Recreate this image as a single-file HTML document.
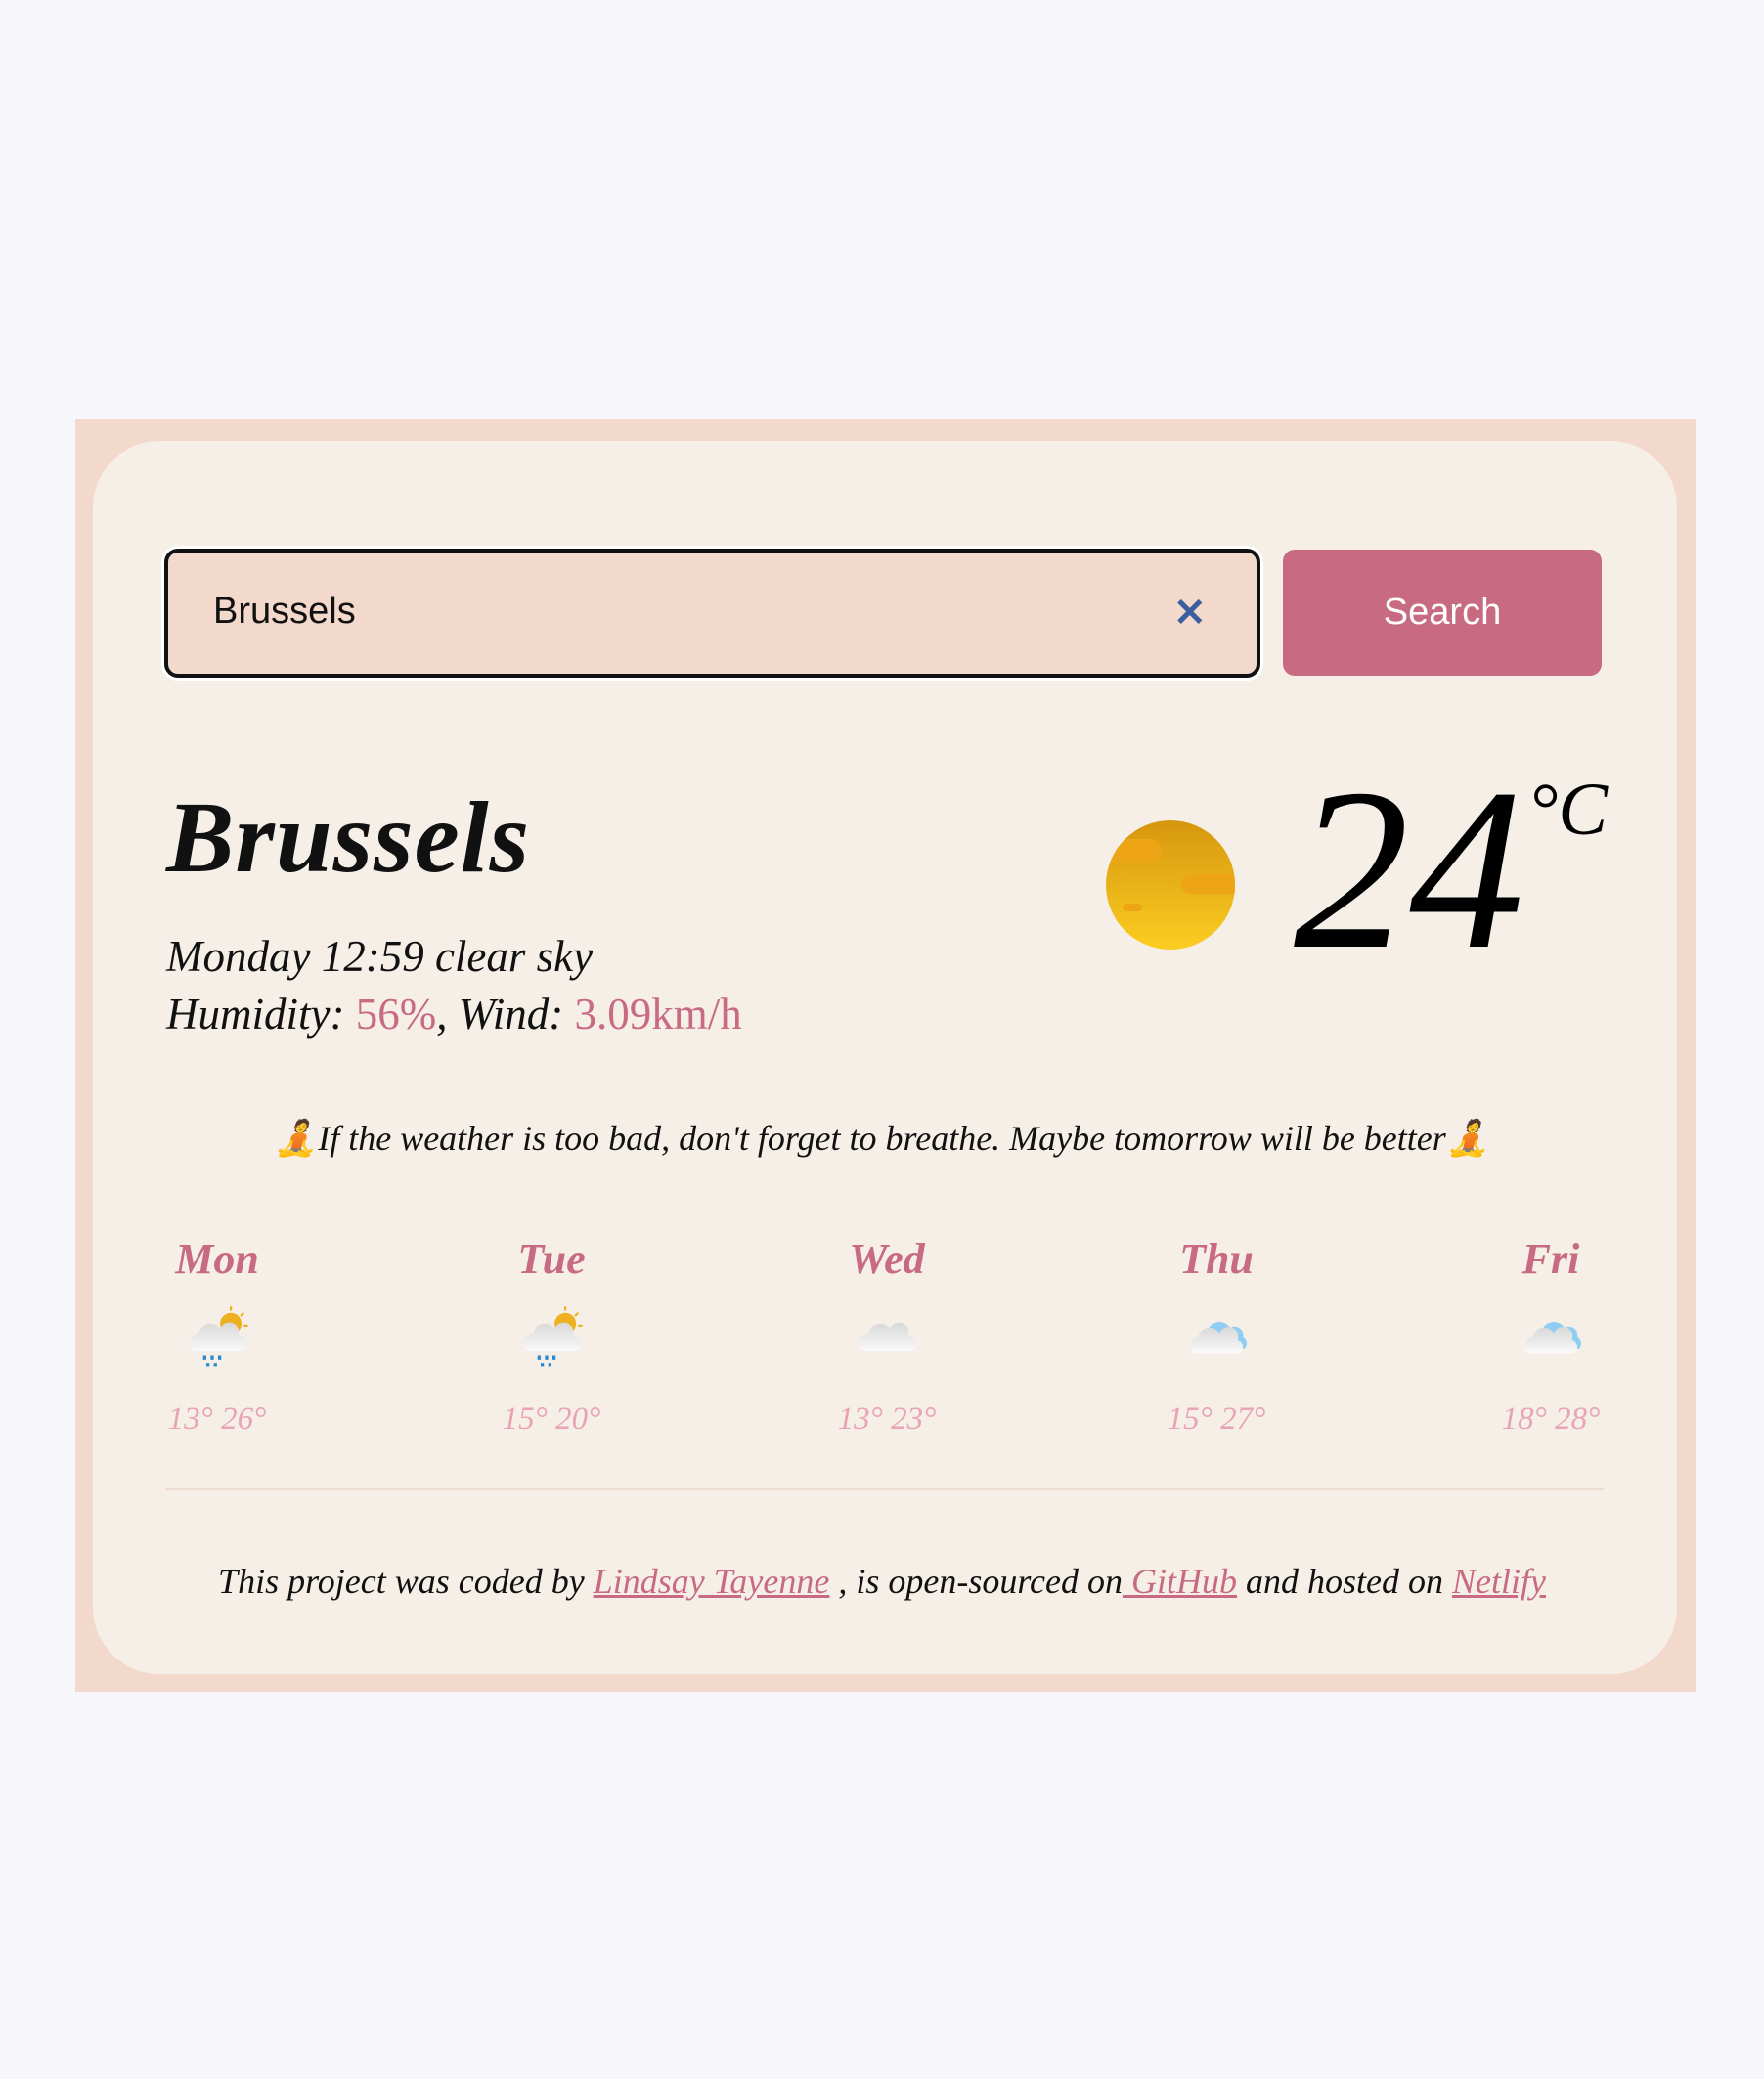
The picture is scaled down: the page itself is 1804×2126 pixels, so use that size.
<!DOCTYPE html>
<html><head><meta charset="utf-8">
<style>
*{margin:0;padding:0;box-sizing:border-box}
body{width:1804px;height:2126px;background:#f7f7fb;position:relative;overflow:hidden;font-family:"Liberation Serif",serif}
.outer{position:absolute;left:77px;top:428px;width:1657px;height:1302px;background:#f3d8cc}
.card{position:absolute;left:95px;top:451px;width:1620px;height:1261px;background:#f5efe8;border-radius:68px}
.abs{position:absolute;white-space:nowrap}
.input{left:168px;top:561px;width:1121px;height:132px;background:#f3d8cc;border:4px solid #111;border-radius:14px;box-shadow:0 0 0 3px #fff}
.btn{left:1312px;top:562px;width:326px;height:129px;background:#c76a82;border-radius:12px;color:#fff;font-family:"Liberation Sans",sans-serif;font-size:38px;text-align:center;line-height:129px}
.it{font-style:italic}
.pink{color:#c76a82}
.day{font-style:italic;font-weight:bold;color:#c76a82;font-size:44px;width:200px;text-align:center}
.tmp{font-style:italic;color:#e8a4b4;font-size:33px;width:200px;text-align:center}
a{color:#c76a82;text-decoration:underline}
</style></head><body>
<div class="outer"></div>
<div class="card"></div>
<div class="abs input"></div>
<div class="abs" style="left:218px;top:604px;font-family:'Liberation Sans',sans-serif;font-size:38px;color:#111">Brussels</div>
<div class="abs" style="left:1200px;top:604px;font-family:'Liberation Sans',sans-serif;font-size:40px;font-weight:bold;color:#3b5f9e">✕</div>
<div class="abs btn">Search</div>

<div class="abs it" style="left:170px;top:797px;font-size:104px;font-weight:bold;color:#111;letter-spacing:1px">Brussels</div>
<div class="abs it" style="left:170px;top:952px;font-size:45px;color:#111">Monday 12:59 clear sky</div>
<div class="abs it" style="left:170px;top:1011px;font-size:45px;color:#111">Humidity: <span class="pink" style="font-style:normal">56%</span>, Wind: <span class="pink" style="font-style:normal">3.09km/h</span></div>

<svg class="abs" style="left:1128px;top:838px" width="138" height="134" viewBox="0 0 138 134">
<defs><linearGradient id="sg" x1="0" y1="0" x2="0" y2="1"><stop offset="0" stop-color="#d6960e"/><stop offset="1" stop-color="#fbcd22"/></linearGradient>
<clipPath id="c"><circle cx="69" cy="67" r="66"/></clipPath></defs>
<circle cx="69" cy="67" r="66" fill="url(#sg)"/>
<g clip-path="url(#c)" fill="#eda515"><rect x="0" y="20" width="60" height="24" rx="12"/><rect x="80" y="56" width="70" height="20" rx="10"/><rect x="20" y="86" width="20" height="8" rx="4"/></g>
</svg>
<div class="abs it" style="left:1323px;top:772px;font-size:236px;color:#000;line-height:1">24</div>
<div class="abs" style="left:1563px;top:785px;font-size:76px;font-style:italic;color:#000">°C</div>

<div class="abs it" style="left:0;width:1804px;text-align:center;top:1143px;font-size:36px;color:#111">🧘If the weather is too bad, don't forget to breathe. Maybe tomorrow will be better🧘</div>

<div class="abs day" style="left:122px;top:1262px">Mon</div>
<div class="abs day" style="left:464px;top:1262px">Tue</div>
<div class="abs day" style="left:807px;top:1262px">Wed</div>
<div class="abs day" style="left:1144px;top:1262px">Thu</div>
<div class="abs day" style="left:1486px;top:1262px">Fri</div>

<svg width="0" height="0" style="position:absolute"><defs>
<linearGradient id="cg" x1="0" y1="0" x2="0" y2="1"><stop offset="0" stop-color="#d8d8d8"/><stop offset="1" stop-color="#fafafa"/></linearGradient>
<symbol id="rain" viewBox="0 0 64 64"><circle cx="44" cy="18" r="10" fill="#eeb020"/><g stroke="#eeb020" stroke-width="2"><line x1="44" y1="2" x2="44" y2="6"/><line x1="56" y1="8" x2="53" y2="11"/><line x1="60" y1="20" x2="56" y2="20"/></g><path d="M10 44a9 9 0 0 1 4-17a11 11 0 0 1 20-4a9 9 0 0 1 17 6a7 7 0 0 1 1 15z" fill="url(#cg)"/><g fill="#2a8ccc"><rect x="18" y="48" width="3" height="4"/><rect x="25" y="48" width="3" height="4"/><rect x="32" y="48" width="3" height="4"/><rect x="21" y="55" width="3" height="3"/><rect x="28" y="55" width="3" height="3"/></g></symbol>
<symbol id="cloud" viewBox="0 0 64 64"><path d="M10 44a9 9 0 0 1 4-17a11 11 0 0 1 20-4a9 9 0 0 1 17 6a7 7 0 0 1 1 15z" fill="url(#cg)"/></symbol>
<symbol id="bcloud" viewBox="0 0 64 64"><path d="M22 30a12 12 0 0 1 22-8a8 8 0 0 1 12 8a7 7 0 0 1 0 12h-30z" fill="#8fcdf3"/><path d="M10 46a9 9 0 0 1 4-16a11 11 0 0 1 20-3a9 9 0 0 1 17 6a7 7 0 0 1 1 13z" fill="url(#cg)"/></symbol>
</defs></svg>
<svg class="abs" style="left:188px;top:1334px" width="70" height="70"><use href="#rain"/></svg>
<svg class="abs" style="left:530px;top:1334px" width="70" height="70"><use href="#rain"/></svg>
<svg class="abs" style="left:873px;top:1334px" width="70" height="70"><use href="#cloud"/></svg>
<svg class="abs" style="left:1210px;top:1334px" width="70" height="70"><use href="#bcloud"/></svg>
<svg class="abs" style="left:1552px;top:1334px" width="70" height="70"><use href="#bcloud"/></svg>

<div class="abs tmp" style="left:122px;top:1433px">13° 26°</div>
<div class="abs tmp" style="left:464px;top:1433px">15° 20°</div>
<div class="abs tmp" style="left:807px;top:1433px">13° 23°</div>
<div class="abs tmp" style="left:1144px;top:1433px">15° 27°</div>
<div class="abs tmp" style="left:1486px;top:1433px">18° 28°</div>

<div class="abs" style="left:169px;top:1522px;width:1471px;height:2px;background:#ecdcd0"></div>

<div class="abs it" style="left:0;width:1804px;text-align:center;top:1596px;font-size:36px;color:#111">This project was coded by <a>Lindsay Tayenne</a> , is open-sourced on<a> GitHub</a> and hosted on <a>Netlify</a></div>
</body></html>
